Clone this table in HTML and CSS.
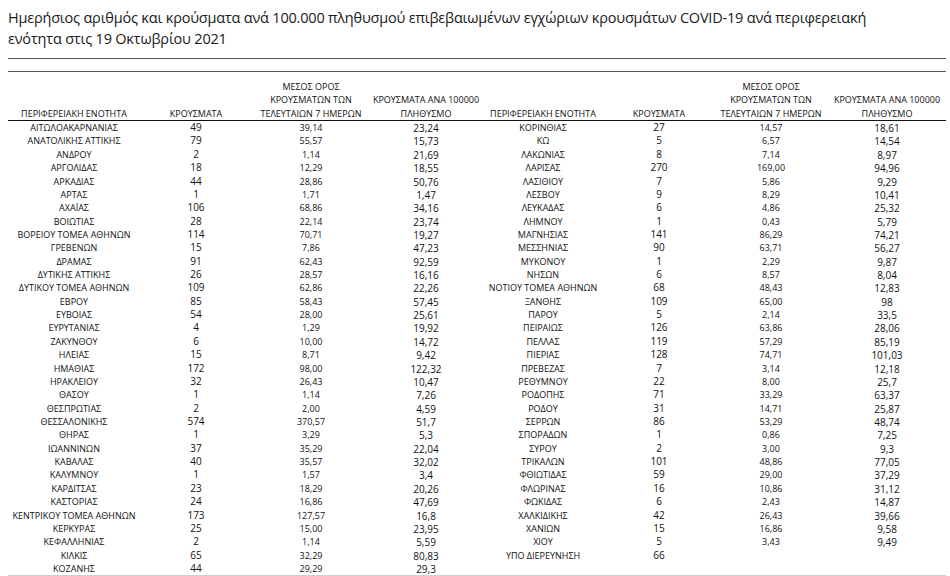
FILE: index.html
```html
<!DOCTYPE html>
<html lang="el">
<head>
<meta charset="utf-8">
<title>Κρούσματα COVID-19 ανά περιφερειακή ενότητα</title>
<link rel="stylesheet" href="styles.css">
</head>
<body>
<div class="page">
  <h1 class="title">Ημερήσιος αριθμός και κρούσματα ανά 100.000 πληθυσμού επιβεβαιωμένων εγχώριων κρουσμάτων COVID-19 ανά περιφερειακή<br>ενότητα στις 19 Οκτωβρίου 2021</h1>
  <div class="rule rule-a"></div>
  <div class="rule rule-b"></div>
  <div class="sheet">
    <div class="head">
      <div class="h">ΠΕΡΙΦΕΡΕΙΑΚΗ ΕΝΟΤΗΤΑ</div>
      <div class="h">ΚΡΟΥΣΜΑΤΑ</div>
      <div class="h">ΜΕΣΟΣ ΟΡΟΣ<br>ΚΡΟΥΣΜΑΤΩΝ ΤΩΝ<br>ΤΕΛΕΥΤΑΙΩΝ 7 ΗΜΕΡΩΝ</div>
      <div class="h">ΚΡΟΥΣΜΑΤΑ ΑΝΑ 100000<br>ΠΛΗΘΥΣΜΟ</div>
      <div class="h">ΠΕΡΙΦΕΡΕΙΑΚΗ ΕΝΟΤΗΤΑ</div>
      <div class="h">ΚΡΟΥΣΜΑΤΑ</div>
      <div class="h">ΜΕΣΟΣ ΟΡΟΣ<br>ΚΡΟΥΣΜΑΤΩΝ ΤΩΝ<br>ΤΕΛΕΥΤΑΙΩΝ 7 ΗΜΕΡΩΝ</div>
      <div class="h">ΚΡΟΥΣΜΑΤΑ ΑΝΑ 100000<br>ΠΛΗΘΥΣΜΟ</div>
    </div>
    <div class="body">
      <div class="row"><span class="n">ΑΙΤΩΛΟΑΚΑΡΝΑΝΙΑΣ</span><span class="c">49</span><span class="m">39,14</span><span class="p">23,24</span><span class="n">ΚΟΡΙΝΘΙΑΣ</span><span class="c">27</span><span class="m">14,57</span><span class="p">18,61</span></div>
      <div class="row"><span class="n">ΑΝΑΤΟΛΙΚΗΣ ΑΤΤΙΚΗΣ</span><span class="c">79</span><span class="m">55,57</span><span class="p">15,73</span><span class="n">ΚΩ</span><span class="c">5</span><span class="m">6,57</span><span class="p">14,54</span></div>
      <div class="row"><span class="n">ΑΝΔΡΟΥ</span><span class="c">2</span><span class="m">1,14</span><span class="p">21,69</span><span class="n">ΛΑΚΩΝΙΑΣ</span><span class="c">8</span><span class="m">7,14</span><span class="p">8,97</span></div>
      <div class="row"><span class="n">ΑΡΓΟΛΙΔΑΣ</span><span class="c">18</span><span class="m">12,29</span><span class="p">18,55</span><span class="n">ΛΑΡΙΣΑΣ</span><span class="c">270</span><span class="m">169,00</span><span class="p">94,96</span></div>
      <div class="row"><span class="n">ΑΡΚΑΔΙΑΣ</span><span class="c">44</span><span class="m">28,86</span><span class="p">50,76</span><span class="n">ΛΑΣΙΘΙΟΥ</span><span class="c">7</span><span class="m">5,86</span><span class="p">9,29</span></div>
      <div class="row"><span class="n">ΑΡΤΑΣ</span><span class="c">1</span><span class="m">1,71</span><span class="p">1,47</span><span class="n">ΛΕΣΒΟΥ</span><span class="c">9</span><span class="m">8,29</span><span class="p">10,41</span></div>
      <div class="row"><span class="n">ΑΧΑΪΑΣ</span><span class="c">106</span><span class="m">68,86</span><span class="p">34,16</span><span class="n">ΛΕΥΚΑΔΑΣ</span><span class="c">6</span><span class="m">4,86</span><span class="p">25,32</span></div>
      <div class="row"><span class="n">ΒΟΙΩΤΙΑΣ</span><span class="c">28</span><span class="m">22,14</span><span class="p">23,74</span><span class="n">ΛΗΜΝΟΥ</span><span class="c">1</span><span class="m">0,43</span><span class="p">5,79</span></div>
      <div class="row"><span class="n">ΒΟΡΕΙΟΥ ΤΟΜΕΑ ΑΘΗΝΩΝ</span><span class="c">114</span><span class="m">70,71</span><span class="p">19,27</span><span class="n">ΜΑΓΝΗΣΙΑΣ</span><span class="c">141</span><span class="m">86,29</span><span class="p">74,21</span></div>
      <div class="row"><span class="n">ΓΡΕΒΕΝΩΝ</span><span class="c">15</span><span class="m">7,86</span><span class="p">47,23</span><span class="n">ΜΕΣΣΗΝΙΑΣ</span><span class="c">90</span><span class="m">63,71</span><span class="p">56,27</span></div>
      <div class="row"><span class="n">ΔΡΑΜΑΣ</span><span class="c">91</span><span class="m">62,43</span><span class="p">92,59</span><span class="n">ΜΥΚΟΝΟΥ</span><span class="c">1</span><span class="m">2,29</span><span class="p">9,87</span></div>
      <div class="row"><span class="n">ΔΥΤΙΚΗΣ ΑΤΤΙΚΗΣ</span><span class="c">26</span><span class="m">28,57</span><span class="p">16,16</span><span class="n">ΝΗΣΩΝ</span><span class="c">6</span><span class="m">8,57</span><span class="p">8,04</span></div>
      <div class="row"><span class="n">ΔΥΤΙΚΟΥ ΤΟΜΕΑ ΑΘΗΝΩΝ</span><span class="c">109</span><span class="m">62,86</span><span class="p">22,26</span><span class="n">ΝΟΤΙΟΥ ΤΟΜΕΑ ΑΘΗΝΩΝ</span><span class="c">68</span><span class="m">48,43</span><span class="p">12,83</span></div>
      <div class="row"><span class="n">ΕΒΡΟΥ</span><span class="c">85</span><span class="m">58,43</span><span class="p">57,45</span><span class="n">ΞΑΝΘΗΣ</span><span class="c">109</span><span class="m">65,00</span><span class="p">98</span></div>
      <div class="row"><span class="n">ΕΥΒΟΙΑΣ</span><span class="c">54</span><span class="m">28,00</span><span class="p">25,61</span><span class="n">ΠΑΡΟΥ</span><span class="c">5</span><span class="m">2,14</span><span class="p">33,5</span></div>
      <div class="row"><span class="n">ΕΥΡΥΤΑΝΙΑΣ</span><span class="c">4</span><span class="m">1,29</span><span class="p">19,92</span><span class="n">ΠΕΙΡΑΙΩΣ</span><span class="c">126</span><span class="m">63,86</span><span class="p">28,06</span></div>
      <div class="row"><span class="n">ΖΑΚΥΝΘΟΥ</span><span class="c">6</span><span class="m">10,00</span><span class="p">14,72</span><span class="n">ΠΕΛΛΑΣ</span><span class="c">119</span><span class="m">57,29</span><span class="p">85,19</span></div>
      <div class="row"><span class="n">ΗΛΕΙΑΣ</span><span class="c">15</span><span class="m">8,71</span><span class="p">9,42</span><span class="n">ΠΙΕΡΙΑΣ</span><span class="c">128</span><span class="m">74,71</span><span class="p">101,03</span></div>
      <div class="row"><span class="n">ΗΜΑΘΙΑΣ</span><span class="c">172</span><span class="m">98,00</span><span class="p">122,32</span><span class="n">ΠΡΕΒΕΖΑΣ</span><span class="c">7</span><span class="m">3,14</span><span class="p">12,18</span></div>
      <div class="row"><span class="n">ΗΡΑΚΛΕΙΟΥ</span><span class="c">32</span><span class="m">26,43</span><span class="p">10,47</span><span class="n">ΡΕΘΥΜΝΟΥ</span><span class="c">22</span><span class="m">8,00</span><span class="p">25,7</span></div>
      <div class="row"><span class="n">ΘΑΣΟΥ</span><span class="c">1</span><span class="m">1,14</span><span class="p">7,26</span><span class="n">ΡΟΔΟΠΗΣ</span><span class="c">71</span><span class="m">33,29</span><span class="p">63,37</span></div>
      <div class="row"><span class="n">ΘΕΣΠΡΩΤΙΑΣ</span><span class="c">2</span><span class="m">2,00</span><span class="p">4,59</span><span class="n">ΡΟΔΟΥ</span><span class="c">31</span><span class="m">14,71</span><span class="p">25,87</span></div>
      <div class="row"><span class="n">ΘΕΣΣΑΛΟΝΙΚΗΣ</span><span class="c">574</span><span class="m">370,57</span><span class="p">51,7</span><span class="n">ΣΕΡΡΩΝ</span><span class="c">86</span><span class="m">53,29</span><span class="p">48,74</span></div>
      <div class="row"><span class="n">ΘΗΡΑΣ</span><span class="c">1</span><span class="m">3,29</span><span class="p">5,3</span><span class="n">ΣΠΟΡΑΔΩΝ</span><span class="c">1</span><span class="m">0,86</span><span class="p">7,25</span></div>
      <div class="row"><span class="n">ΙΩΑΝΝΙΝΩΝ</span><span class="c">37</span><span class="m">35,29</span><span class="p">22,04</span><span class="n">ΣΥΡΟΥ</span><span class="c">2</span><span class="m">3,00</span><span class="p">9,3</span></div>
      <div class="row"><span class="n">ΚΑΒΑΛΑΣ</span><span class="c">40</span><span class="m">35,57</span><span class="p">32,02</span><span class="n">ΤΡΙΚΑΛΩΝ</span><span class="c">101</span><span class="m">48,86</span><span class="p">77,05</span></div>
      <div class="row"><span class="n">ΚΑΛΥΜΝΟΥ</span><span class="c">1</span><span class="m">1,57</span><span class="p">3,4</span><span class="n">ΦΘΙΩΤΙΔΑΣ</span><span class="c">59</span><span class="m">29,00</span><span class="p">37,29</span></div>
      <div class="row"><span class="n">ΚΑΡΔΙΤΣΑΣ</span><span class="c">23</span><span class="m">18,29</span><span class="p">20,26</span><span class="n">ΦΛΩΡΙΝΑΣ</span><span class="c">16</span><span class="m">10,86</span><span class="p">31,12</span></div>
      <div class="row"><span class="n">ΚΑΣΤΟΡΙΑΣ</span><span class="c">24</span><span class="m">16,86</span><span class="p">47,69</span><span class="n">ΦΩΚΙΔΑΣ</span><span class="c">6</span><span class="m">2,43</span><span class="p">14,87</span></div>
      <div class="row"><span class="n">ΚΕΝΤΡΙΚΟΥ ΤΟΜΕΑ ΑΘΗΝΩΝ</span><span class="c">173</span><span class="m">127,57</span><span class="p">16,8</span><span class="n">ΧΑΛΚΙΔΙΚΗΣ</span><span class="c">42</span><span class="m">26,43</span><span class="p">39,66</span></div>
      <div class="row"><span class="n">ΚΕΡΚΥΡΑΣ</span><span class="c">25</span><span class="m">15,00</span><span class="p">23,95</span><span class="n">ΧΑΝΙΩΝ</span><span class="c">15</span><span class="m">16,86</span><span class="p">9,58</span></div>
      <div class="row"><span class="n">ΚΕΦΑΛΛΗΝΙΑΣ</span><span class="c">2</span><span class="m">1,14</span><span class="p">5,59</span><span class="n">ΧΙΟΥ</span><span class="c">5</span><span class="m">3,43</span><span class="p">9,49</span></div>
      <div class="row"><span class="n">ΚΙΛΚΙΣ</span><span class="c">65</span><span class="m">32,29</span><span class="p">80,83</span><span class="n">ΥΠΟ ΔΙΕΡΕΥΝΗΣΗ</span><span class="c">66</span><span class="m"></span><span class="p"></span></div>
      <div class="row"><span class="n">ΚΟΖΑΝΗΣ</span><span class="c">44</span><span class="m">29,29</span><span class="p">29,3</span><span class="n"></span><span class="c"></span><span class="m"></span><span class="p"></span></div>
    </div>
  </div>
</div>
</body>
</html>
```
FILE: styles.css
```css
html, body {
  margin: 0;
  padding: 0;
  background: #ffffff;
}

.page {
  width: 938px;
  padding: 7px 0 0 8px;
  font-family: "Open Sans", "Noto Sans", sans-serif;
  color: #111111;
}

.title {
  margin: 0;
  font-size: 14.5px;
  font-weight: 400;
  letter-spacing: -0.2px;
  line-height: 21px;
  white-space: nowrap;
  color: #1a1a1a;
}

.rule {
  height: 1px;
  background: #555555;
}

.rule-a {
  margin-top: 9px;
}

.rule-b {
  margin-top: 12px;
}

.sheet {
  margin-top: 8px;
}

.head,
.row {
  display: grid;
  grid-template-columns: 132px 112px 118px 112px 122px 110px 114px 118px;
}

.head {
  align-items: end;
  border-bottom: 1px solid #111111;
}

.h {
  text-align: center;
  font-size: 9px;
  line-height: 13.36px;
  white-space: nowrap;
}

.body {
  border-bottom: 1px solid #cfcfcf;
}

.row {
  height: 13.36px;
  align-items: end;
}

.row span {
  text-align: center;
  white-space: nowrap;
  line-height: 13.36px;
}

.n {
  font-size: 9px;
}

.c {
  font-size: 10px;
}

.m {
  font-size: 9px;
}

.p {
  font-size: 10px;
  position: relative;
  top: 1px;
}
```
